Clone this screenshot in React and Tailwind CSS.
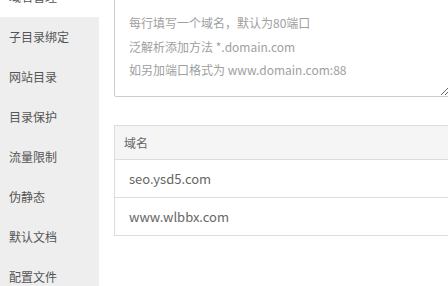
import React from "react";

const items = ["域名管理", "子目录绑定", "网站目录", "目录保护", "流量限制", "伪静态", "默认文档", "配置文件"];

export default function App() {
  const font = { fontFamily: '"Noto Sans CJK SC", "Noto Sans", sans-serif' };
  return (
    <div className="w-[448px] h-[286px] overflow-hidden bg-white" style={font}>
      <div className="flex -mt-[23px]">
        <div className="w-[99px] shrink-0 bg-[#eeeeee] flex flex-col">
          {items.map((t, i) => (
            <div
              key={t}
              className={`h-[40px] flex items-center pl-[9px] text-[12px] text-[#555] ${i === 0 ? "bg-white" : ""}`}
            >
              {t}
            </div>
          ))}
        </div>
        <div className="flex-1 pl-[15px] flex flex-col">
          <textarea
            readOnly
            className="mt-[18px] w-[336px] h-[102px] border border-[#cccccc] rounded-[2px] pt-[15px] pl-[14px] text-[12px] leading-[23.5px] text-[#999] placeholder:text-[#a0a0a0] outline-none"
            style={font}
            placeholder={"每行填写一个域名，默认为80端口\n泛解析添加方法 *.domain.com\n如另加端口格式为 www.domain.com:88"}
          />
          <div className="mt-[28px] w-[340px] border border-[#dddddd] border-r-0">
            <div className="h-[34px] bg-[#f5f5f5] border-b border-[#dddddd] flex items-center pl-[9px] text-[12px] text-[#666]">
              域名
            </div>
            <div className="h-[38px] border-b border-[#dddddd] flex items-center pl-[14px] text-[13px] text-[#666]">
              seo.ysd5.com
            </div>
            <div className="h-[37px] flex items-center pl-[14px] text-[13px] text-[#666]">
              www.wlbbx.com
            </div>
          </div>
        </div>
      </div>
    </div>
  );
}
